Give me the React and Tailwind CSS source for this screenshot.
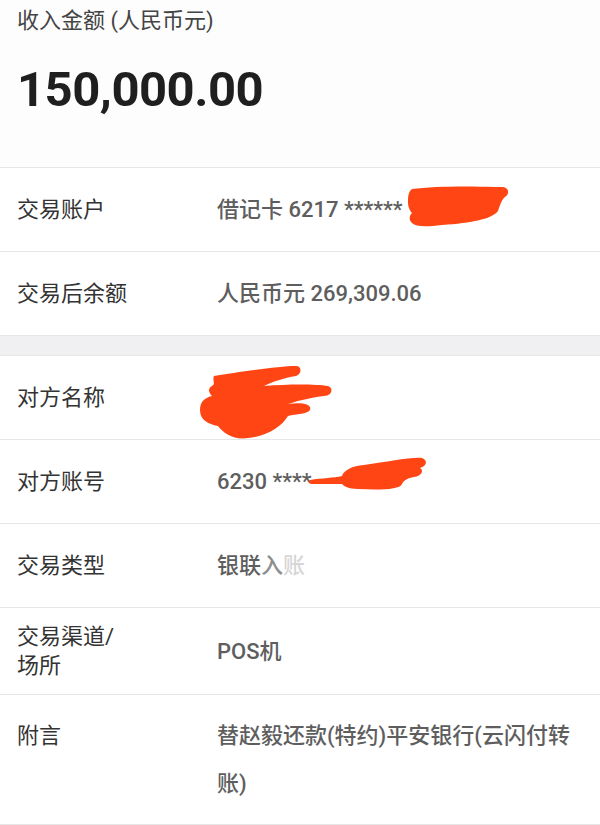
const font = {
  fontFamily: 'Roboto, "Noto Sans CJK SC", "Noto Sans", sans-serif',
};

// red marker scribbles that hide private info
function Scribble({ className, w, h, d }) {
  return (
    <svg className={className} viewBox={`0 0 ${w} ${h}`}>
      <path d={d} fill="#ff4513" />
    </svg>
  );
}

function Row({ label, children, className = "h-[84px] items-center" }) {
  return (
    <div className={`relative flex border-b border-[#e6e6e6] bg-white ${className}`}>
      <div className="w-[217px] shrink-0 pl-[17px] text-[22px] text-[#333]">{label}</div>
      <div className="flex-1 pr-[17px] text-[22px] font-medium text-[#5e5e5e]">{children}</div>
    </div>
  );
}

export default function App() {
  return (
    <div className="w-[600px] h-[825px] overflow-hidden bg-white" style={font}>
      {/* header */}
      <div className="h-[168px] border-b border-[#e6e6e6] bg-[#fdfdfd] pl-[17px] pt-[6px]">
        <div className="text-[22px] leading-[30px] text-[#444]">收入金额 (人民币元)</div>
        <div className="mt-[24px] text-[49px] leading-[60px] font-bold text-[#1f1f1f] tracking-[-0.5px]">
          150,000.00
        </div>
      </div>

      <Row label="交易账户">
        <span>借记卡 6217 ******</span>
        <Scribble
          className="absolute left-[402px] top-[15px] w-[110px] h-[46px]"
          w={110}
          h={46}
          d="M10 6 C30 3 70 3 92 4 L100 4 C107 4 108 11 103 14 C100 16 98 22 96 28 C90 36 70 40 40 42 C24 44 14 44 10 40 C6 36 8 32 10 30 C8 28 6 24 6 20 C6 14 6 9 10 6 Z"
        />
      </Row>
      <Row label="交易后余额">人民币元 269,309.06</Row>

      <div className="h-[20px] bg-[#f0f0f2] border-b border-[#e6e6e6]" />

      <Row label="对方名称">
        <span>&nbsp;</span>
        <Scribble
          className="absolute left-[198px] top-[10px] w-[136px] h-[76px]"
          w={136}
          h={76}
          d="M16 10 C40 6 80 0 98 0 C104 0 104 8 98 10 C86 12 74 16 66 20 C90 18 118 18 130 20 C136 22 134 30 126 30 C110 32 96 36 90 38 C104 36 114 38 112 44 C110 48 98 48 90 50 C84 60 70 70 50 72 C36 74 26 68 20 60 C10 58 2 54 2 44 C2 36 6 32 14 30 C10 26 10 22 14 20 C18 18 14 14 16 10 Z"
        />
      </Row>
      <Row label="对方账号">
        <span>6230 ****</span>
        <Scribble
          className="absolute left-[308px] top-[16px] w-[120px] h-[36px]"
          w={120}
          h={36}
          d="M2 24 C14 22 26 22 34 20 C36 14 44 10 56 9 C80 6 102 1 114 2 C120 4 119 10 112 12 C116 14 114 20 106 21 C100 22 96 24 94 28 C92 34 70 34 50 33 C40 33 36 30 34 28 C24 28 12 28 4 28 C0 28 0 25 2 24 Z"
        />
      </Row>
      <Row label="交易类型">
        <span>银联</span>
        <span className="text-[#8e8e8e]">入</span>
        <span className="text-[#d6d6d6]">账</span>
      </Row>
      <Row label={<div className="leading-[29px]">交易渠道/<br />场所</div>} className="h-[87px] items-center">
        POS机
      </Row>
      <Row label="附言" className="items-start pt-[17px] pb-[16px] leading-[48px]">
        替赵毅还款(特约)平安银行(云闪付转账)
      </Row>
    </div>
  );
}
